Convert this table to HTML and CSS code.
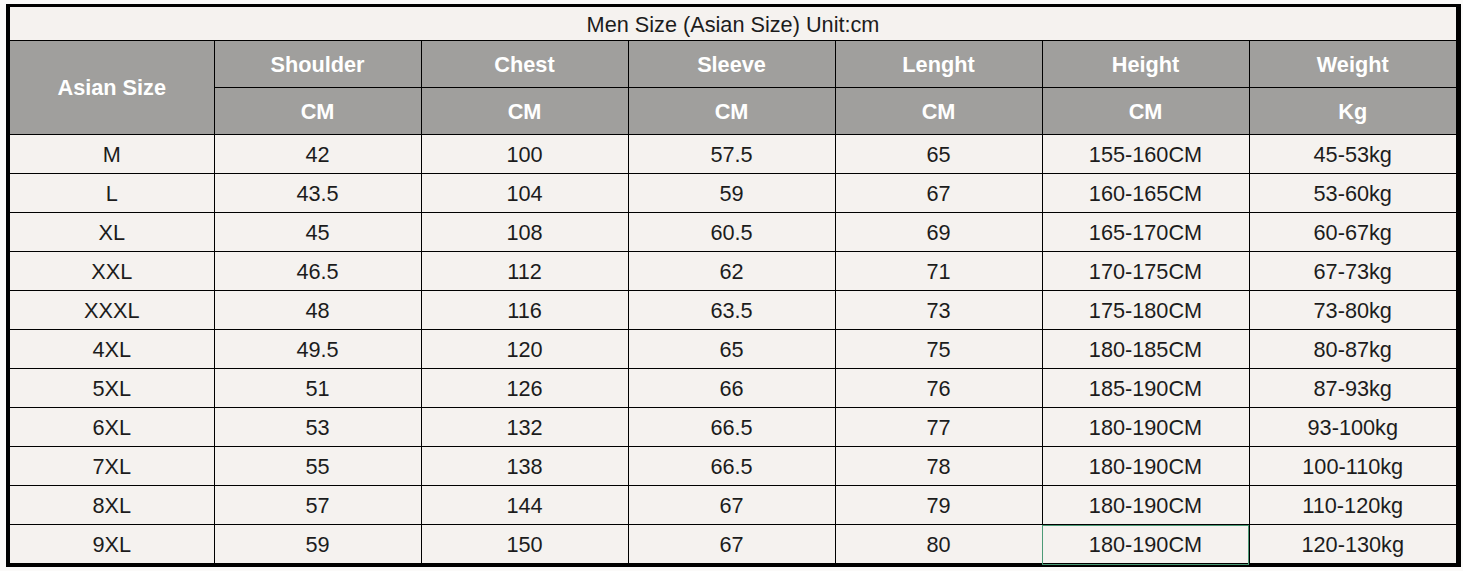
FILE: index.html
```html
<!DOCTYPE html>
<html>
<head>
<meta charset="utf-8">
<link rel="stylesheet" href="styles.css">
</head>
<body>
<div class="page">
<table class="size-table">
<colgroup>
<col class="c-first"><col class="c"><col class="c"><col class="c"><col class="c"><col class="c"><col>
</colgroup>
<thead>
<tr class="title-row"><th colspan="7">Men Size (Asian Size) Unit:cm</th></tr>
<tr class="head-row">
<th rowspan="2" class="hd">Asian Size</th>
<th class="hd">Shoulder</th><th class="hd">Chest</th><th class="hd">Sleeve</th><th class="hd">Lenght</th><th class="hd">Height</th><th class="hd">Weight</th>
</tr>
<tr class="head-row">
<th class="hd">CM</th><th class="hd">CM</th><th class="hd">CM</th><th class="hd">CM</th><th class="hd">CM</th><th class="hd">Kg</th>
</tr>
</thead>
<tbody>
<tr><td>M</td><td>42</td><td>100</td><td>57.5</td><td>65</td><td>155-160CM</td><td>45-53kg</td></tr>
<tr><td>L</td><td>43.5</td><td>104</td><td>59</td><td>67</td><td>160-165CM</td><td>53-60kg</td></tr>
<tr><td>XL</td><td>45</td><td>108</td><td>60.5</td><td>69</td><td>165-170CM</td><td>60-67kg</td></tr>
<tr><td>XXL</td><td>46.5</td><td>112</td><td>62</td><td>71</td><td>170-175CM</td><td>67-73kg</td></tr>
<tr><td>XXXL</td><td>48</td><td>116</td><td>63.5</td><td>73</td><td>175-180CM</td><td>73-80kg</td></tr>
<tr><td>4XL</td><td>49.5</td><td>120</td><td>65</td><td>75</td><td>180-185CM</td><td>80-87kg</td></tr>
<tr><td>5XL</td><td>51</td><td>126</td><td>66</td><td>76</td><td>185-190CM</td><td>87-93kg</td></tr>
<tr><td>6XL</td><td>53</td><td>132</td><td>66.5</td><td>77</td><td>180-190CM</td><td>93-100kg</td></tr>
<tr><td>7XL</td><td>55</td><td>138</td><td>66.5</td><td>78</td><td>180-190CM</td><td>100-110kg</td></tr>
<tr><td>8XL</td><td>57</td><td>144</td><td>67</td><td>79</td><td>180-190CM</td><td>110-120kg</td></tr>
<tr><td>9XL</td><td>59</td><td>150</td><td>67</td><td>80</td><td class="selected">180-190CM</td><td>120-130kg</td></tr>
</tbody>
</table>
</div>
</body>
</html>
```
FILE: styles.css
```css
html, body {
  margin: 0;
  padding: 0;
  background: #fbfaf9;
}
.page {
  padding: 4px 2px 0 6px;
}
.size-table {
  width: 1455px;
  table-layout: fixed;
  border-collapse: collapse;
  border-top: 3px solid #000;
  border-left: 4px solid #000;
  border-right: 5px solid #000;
  border-bottom: 4px solid #000;
  background: #f5f2ef;
  font-family: "Liberation Sans", Arial, sans-serif;
  font-size: 21.7px;
  color: #1c1c1c;
}
.c-first { width: 206px; }
.c { width: 207px; }
.size-table th,
.size-table td {
  border: 1px solid #000;
  padding: 2px 0 0;
  text-align: center;
  vertical-align: middle;
}
.title-row th {
  height: 31px;
  font-weight: normal;
  color: #1c1c1c;
  background: #f5f2ef;
}
.head-row .hd {
  height: 45px;
  padding-top: 1px;
  background: #a09f9d;
  color: #fff;
  font-weight: bold;
}
.size-table tbody td {
  height: 36px;
}
.size-table td.selected {
  outline: 1px solid #4c9a76;
  outline-offset: -1px;
}
```
